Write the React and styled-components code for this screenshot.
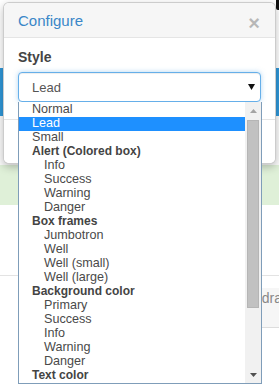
import React from 'react';
import styled, { createGlobalStyle } from 'styled-components';

const GlobalStyle = createGlobalStyle`
	html, body {
		margin: 0;
		padding: 0;
		background: #fff;
	}
	body {
		font-family: 'Liberation Sans', Arial, sans-serif;
		color: #333;
	}
`;

const STYLE_OPTIONS = [
	{ label: 'Normal' },
	{ label: 'Lead', selected: true },
	{ label: 'Small' },
	{ label: 'Alert (Colored box)', group: true },
	{ label: 'Info', indent: true },
	{ label: 'Success', indent: true },
	{ label: 'Warning', indent: true },
	{ label: 'Danger', indent: true },
	{ label: 'Box frames', group: true },
	{ label: 'Jumbotron', indent: true },
	{ label: 'Well', indent: true },
	{ label: 'Well (small)', indent: true },
	{ label: 'Well (large)', indent: true },
	{ label: 'Background color', group: true },
	{ label: 'Primary', indent: true },
	{ label: 'Success', indent: true },
	{ label: 'Info', indent: true },
	{ label: 'Warning', indent: true },
	{ label: 'Danger', indent: true },
	{ label: 'Text color', group: true },
];

const Page = styled.div`
	position: relative;
	width: 279px;
	height: 386px;
	overflow: hidden;
	display: flex;
	flex-direction: column;
`;

const TopBand = styled.div`
	flex-shrink: 0;
	height: 68px;
	display: flex;
	justify-content: flex-end;
	align-items: flex-start;
`;

const DarkCorner = styled.div`
	width: 3px;
	height: 10px;
	background: #111;
	border-bottom-left-radius: 2px;
`;

const NavBand = styled.div`
	flex-shrink: 0;
	height: 48px;
	background: #3097d8;
`;

const PlainBand = styled.div`
	flex-shrink: 0;
	height: 49px;
	background: #fbfbfb;
`;

const AlertBand = styled.div`
	flex-shrink: 0;
	height: 40px;
	background: #dff0d8;
`;

const ContentArea = styled.div`
	flex: 1 0 auto;
	display: flex;
	flex-direction: column;
	padding-top: 70px;
`;

const Divider = styled.div`
	height: 1px;
	background: #e3e3e3;
`;

const TabRow = styled.div`
	margin-top: 12px;
	display: flex;
`;

const Tab = styled.div`
	margin-left: 213px;
	height: 40px;
	padding: 2px 0 0 13px;
	box-sizing: border-box;
	background: #f6f6f6;
	border-bottom: 1px solid #ddd;
	font-size: 14px;
	color: #888;
	white-space: nowrap;
`;

const Modal = styled.div`
	position: absolute;
	z-index: 1;
	top: 2px;
	left: 3px;
	width: 273px;
	height: 162px;
	box-sizing: border-box;
	background: #fff;
	border: 1px solid rgba(0, 0, 0, 0.2);
	border-radius: 6px;
	box-shadow: 0 3px 9px rgba(0, 0, 0, 0.25);
	display: flex;
	flex-direction: column;
	overflow: hidden;
`;

const ModalHeader = styled.div`
	flex-shrink: 0;
	height: 35px;
	box-sizing: border-box;
	padding: 8px 13px 0 14px;
	background: #f6f6f6;
	border-bottom: 1px solid #e5e5e5;
	display: flex;
	justify-content: space-between;
	align-items: flex-start;
`;

const Title = styled.h4`
	margin: 0;
	font-size: 15px;
	line-height: 20px;
	font-weight: normal;
	color: #3a87c8;
`;

const CloseButton = styled.button`
	border: 0;
	background: none;
	padding: 0;
	margin: 2px 2px 0 0;
	font-family: 'Liberation Sans', Arial, sans-serif;
	font-size: 20px;
	font-weight: bold;
	line-height: 20px;
	color: #000;
	opacity: 0.25;
`;

const ModalBody = styled.div`
	flex-shrink: 0;
	background: #fff;
	padding: 9px 14px 0 14px;
	height: 82px;
	box-sizing: border-box;
	border-bottom: 1px solid #e5e5e5;
	display: flex;
	flex-direction: column;
`;

const Label = styled.label`
	font-size: 14px;
	line-height: 20px;
	font-weight: bold;
	color: #444;
	margin-bottom: 5px;
`;

const SelectBox = styled.div`
	height: 30px;
	box-sizing: border-box;
	background: #fff;
	border: 1px solid #66afe9;
	border-radius: 4px;
	box-shadow: inset 0 1px 1px rgba(0, 0, 0, 0.075), 0 0 5px rgba(102, 175, 233, 0.5);
	display: flex;
	align-items: center;
	justify-content: space-between;
	padding: 0 5px 0 13px;
	font-size: 13px;
	color: #555;
`;

const Caret = () => (
	<svg width="7" height="6" viewBox="0 0 7 6">
		<path d="M0 0 H7 L3.5 6 Z" fill="#111" />
	</svg>
);

const ModalFooter = styled.div`
	flex: 1;
	background: #fff;
`;

const Dropdown = styled.div`
	position: absolute;
	z-index: 2;
	top: 102px;
	left: 18px;
	width: 244px;
	height: 282px;
	box-sizing: border-box;
	border: 1px solid #7f9db9;
	border-top: 0;
	background: #fff;
	display: flex;
`;

const OptionList = styled.div`
	width: 226px;
	padding-top: 1px;
	display: flex;
	flex-direction: column;
`;

const Option = styled.div`
	height: 14px;
	line-height: 12px;
	padding-left: ${p => (p.$indent ? '25px' : '13px')};
	font-size: ${p => (p.$group ? '12px' : '12.6px')};
	font-weight: ${p => (p.$group ? 'bold' : 'normal')};
	white-space: nowrap;
	background: ${p => (p.$selected ? '#1e90ff' : 'transparent')};
	color: ${p => (p.$selected ? '#fff' : p.$group ? '#444' : '#4a4a4a')};
`;

const Scrollbar = styled.div`
	width: 16px;
	background: #f1f1f1;
	display: flex;
	flex-direction: column;
	align-items: center;
`;

const ScrollButton = styled.div`
	height: 17px;
	display: flex;
	align-items: center;
	justify-content: center;
`;

const Thumb = styled.div`
	margin-top: 1px;
	width: 12px;
	height: 188px;
	box-sizing: border-box;
	background: #c1c1c1;
	border: 1px solid #b5b5b5;
`;

const Spacer = styled.div`
	flex: 1;
`;

const Arrow = ({ up, color }) => (
	<svg width="7" height="4" viewBox="0 0 7 4">
		<path d={up ? 'M0 4 H7 L3.5 0 Z' : 'M0 0 H7 L3.5 4 Z'} fill={color} />
	</svg>
);

const App = () => {
	return (
		<Page>
			<GlobalStyle />
			<TopBand>
				<DarkCorner />
			</TopBand>
			<NavBand />
			<PlainBand />
			<AlertBand />
			<ContentArea>
				<Divider />
				<TabRow>
					<Tab>Save draft</Tab>
				</TabRow>
			</ContentArea>

			<Modal>
				<ModalHeader>
					<Title>Configure</Title>
					<CloseButton>×</CloseButton>
				</ModalHeader>
				<ModalBody>
					<Label>Style</Label>
					<SelectBox>
						<span>Lead</span>
						<Caret />
					</SelectBox>
				</ModalBody>
				<ModalFooter />
			</Modal>

			<Dropdown>
				<OptionList>
					{STYLE_OPTIONS.map((o, i) => (
						<Option
							key={i}
							$selected={o.selected}
							$group={o.group}
							$indent={o.indent}
						>
							{o.label}
						</Option>
					))}
				</OptionList>
				<Scrollbar>
					<ScrollButton>
						<Arrow up color="#a3a3a3" />
					</ScrollButton>
					<Thumb />
					<Spacer />
					<ScrollButton>
						<Arrow color="#505050" />
					</ScrollButton>
				</Scrollbar>
			</Dropdown>
		</Page>
	);
};

export default App;
